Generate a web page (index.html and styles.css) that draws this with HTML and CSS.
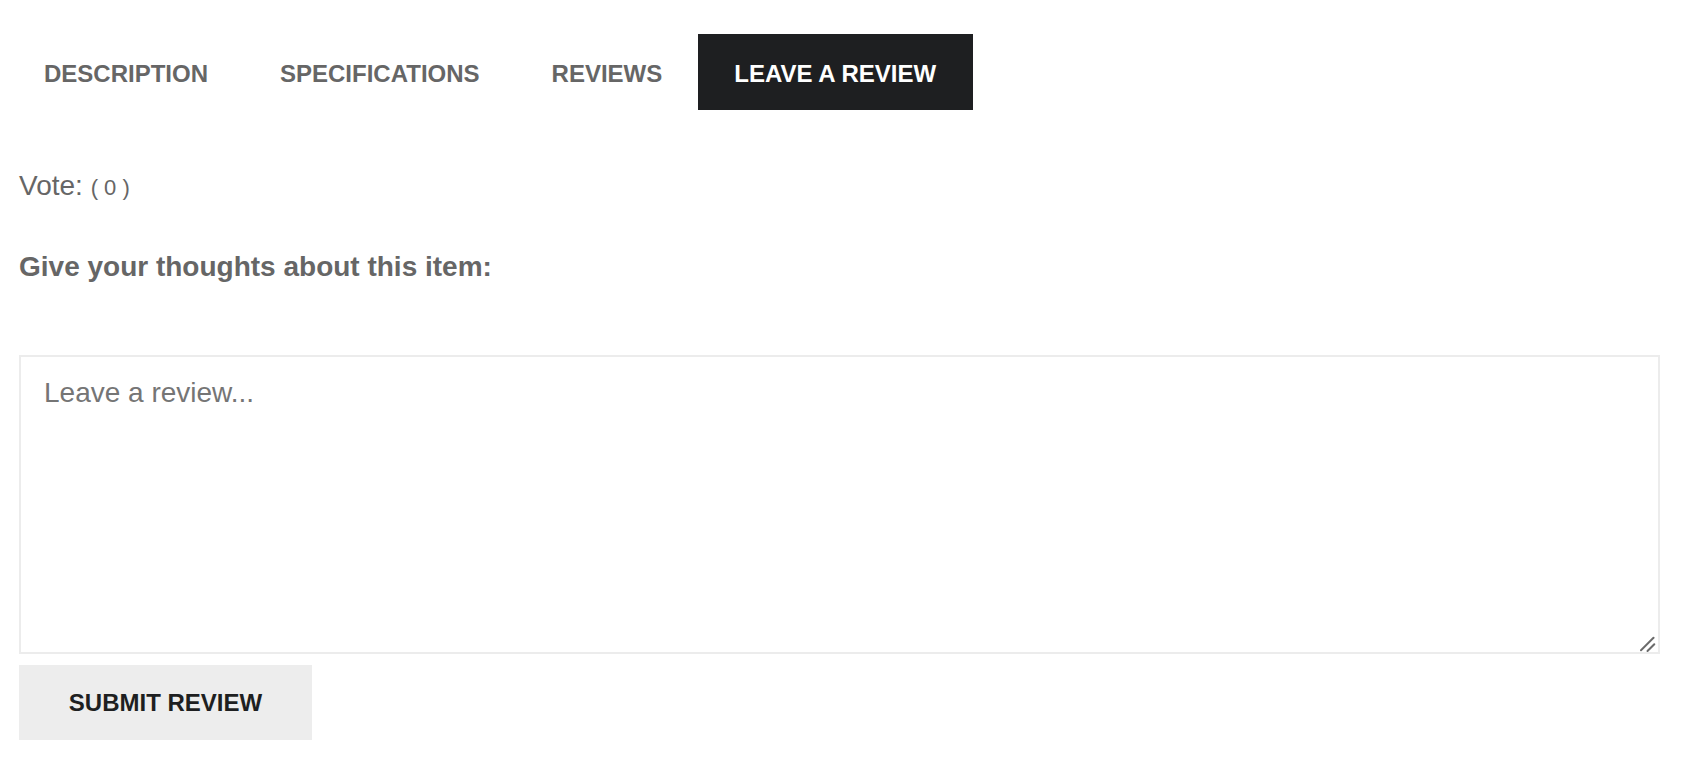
FILE: index.html
```html
<!DOCTYPE html>
<html lang="en">
<head>
<meta charset="utf-8">
<title>Leave a review</title>
<link rel="stylesheet" href="styles.css">
</head>
<body>
  <nav class="tabs">
    <a class="tab">DESCRIPTION</a>
    <a class="tab">SPECIFICATIONS</a>
    <a class="tab">REVIEWS</a>
    <a class="tab tab-active">LEAVE A REVIEW</a>
  </nav>
  <section class="content">
    <div class="vote">Vote: <span class="vote-count">( 0 )</span></div>
    <h3 class="prompt">Give your thoughts about this item:</h3>
    <form class="review-form">
      <div class="field">
        <textarea class="review-text" placeholder="Leave a review..."></textarea>
        <svg class="grip" width="20" height="20" viewBox="0 0 20 20" aria-hidden="true">
          <line x1="1" y1="16.3" x2="13.5" y2="3.8" />
          <line x1="7.5" y1="17" x2="14.3" y2="10.2" />
        </svg>
      </div>
      <button type="button" class="submit">SUBMIT REVIEW</button>
    </form>
  </section>
</body>
</html>
```

FILE: styles.css
```css
html, body {
  margin: 0;
  padding: 0;
  background: #ffffff;
  font-family: "Liberation Sans", Arial, sans-serif;
}

.tabs {
  display: flex;
  padding: 34px 0 0 8px;
}

.tab {
  display: block;
  padding: 4px 36px 0;
  height: 72px;
  line-height: 72px;
  font-size: 24px;
  font-weight: 700;
  color: #666666;
  white-space: nowrap;
}

.tab-active {
  padding: 4px 37px 0 36px;
  background: #1e1f21;
  color: #ffffff;
}

.content {
  padding: 0 44px 0 19px;
}

.vote {
  margin-top: 60px;
  font-size: 28px;
  line-height: 32px;
  color: #666666;
}

.vote-count {
  font-size: 22px;
}

.prompt {
  margin: 47px 0 0;
  font-size: 28px;
  line-height: 32px;
  font-weight: 700;
  color: #666666;
}

.review-form {
  margin-top: 72px;
}

.field {
  position: relative;
}

.review-text {
  display: block;
  box-sizing: border-box;
  width: 100%;
  height: 299px;
  margin: 0;
  padding: 20px 23px;
  border: 2px solid #ececec;
  border-radius: 0;
  font-family: "Liberation Sans", Arial, sans-serif;
  font-size: 28px;
  line-height: 32px;
  color: #444444;
  outline: none;
  resize: none;
}

.review-text::placeholder {
  color: #757575;
}

.grip {
  position: absolute;
  right: 0;
  bottom: 0;
  stroke: #6b6b6b;
  stroke-width: 2;
  stroke-linecap: round;
  pointer-events: none;
}

.submit {
  display: block;
  margin-top: 11px;
  width: 293px;
  height: 75px;
  border: none;
  background: #ededed;
  font-family: "Liberation Sans", Arial, sans-serif;
  font-size: 24px;
  font-weight: 700;
  color: #1e1f21;
  cursor: pointer;
}
```
